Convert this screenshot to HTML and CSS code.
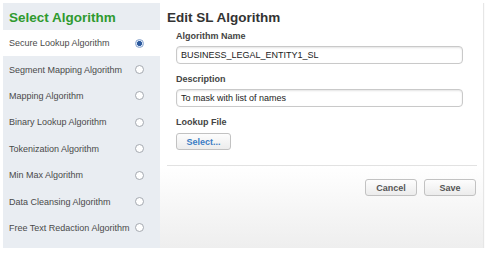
FILE: index.html
```html
<!DOCTYPE html>
<html lang="en">
<head>
    <meta charset="UTF-8">
    <title>Edit SL Algorithm</title>
    <link rel="stylesheet" href="styles.css">
</head>
<body>
    <div class="dialog">
        <div class="sidebar">
            <h1 class="sidebar-title">Select Algorithm</h1>
            <ul class="algo-list">
                <li class="algo-item selected"><span>Secure Lookup Algorithm</span><span class="radio"></span></li>
                <li class="algo-item"><span>Segment Mapping Algorithm</span><span class="radio"></span></li>
                <li class="algo-item"><span>Mapping Algorithm</span><span class="radio"></span></li>
                <li class="algo-item"><span>Binary Lookup Algorithm</span><span class="radio"></span></li>
                <li class="algo-item"><span>Tokenization Algorithm</span><span class="radio"></span></li>
                <li class="algo-item"><span>Min Max Algorithm</span><span class="radio"></span></li>
                <li class="algo-item"><span>Data Cleansing Algorithm</span><span class="radio"></span></li>
                <li class="algo-item"><span>Free Text Redaction Algorithm</span><span class="radio"></span></li>
            </ul>
        </div>

        <div class="editor">
            <h2 class="editor-title">Edit SL Algorithm</h2>
            <div class="form">
                <div class="field">
                    <label class="field-label">Algorithm Name</label>
                    <div class="text-input">BUSINESS_LEGAL_ENTITY1_SL</div>
                </div>
                <div class="field">
                    <label class="field-label">Description</label>
                    <div class="text-input">To mask with list of names</div>
                </div>
                <div class="field">
                    <label class="field-label">Lookup File</label>
                    <button class="btn btn-select">Select...</button>
                </div>
            </div>
            <div class="divider"></div>
            <div class="footer">
                <button class="btn btn-action">Cancel</button>
                <button class="btn btn-action">Save</button>
            </div>
        </div>
    </div>
</body>
</html>
```

FILE: styles.css
```css
body {
    margin: 3px;
    background-color: #fff;
    font-family: "Liberation Sans", Arial, sans-serif;
}

.dialog {
    display: flex;
    width: 480px;
    height: 245px;
}

/* left column */
.sidebar {
    width: 157px;
    background-color: #e9edf2;
}

.sidebar-title {
    margin: 0;
    height: 27px;
    padding-left: 6px;
    line-height: 29px;
    font-size: 13.5px;
    font-weight: bold;
    color: #2f9a2f;
}

.algo-list {
    list-style: none;
    margin: 0;
    padding: 0;
}

.algo-item {
    display: flex;
    align-items: center;
    justify-content: space-between;
    height: 26.4px;
    padding: 0 16px 0 6px;
    font-size: 9px;
    color: #4a4a4a;
}

.algo-item.selected {
    background-color: #fff;
}

.radio {
    width: 7px;
    height: 7px;
    border: 1px solid #a4a9b0;
    border-radius: 50%;
    background-color: #fff;
}

.selected .radio {
    border-color: #8aa6cf;
    background: radial-gradient(circle, #2c5a9e 0 2.2px, #dbe6f5 2.8px);
}

/* right column */
.editor {
    flex: 1;
    display: flex;
    flex-direction: column;
    background-color: #fff;
    box-shadow: 1px 0 1px #e6e6e6;
}

.editor-title {
    margin: 0;
    padding: 6px 7px 0;
    line-height: 18px;
    font-size: 13.5px;
    font-weight: bold;
    color: #333;
}

.form {
    display: flex;
    flex-direction: column;
    gap: 9px;
    padding: 3px 0 0 16px;
}

.field {
    display: flex;
    flex-direction: column;
    align-items: flex-start;
}

.field-label {
    line-height: 12px;
    margin-bottom: 4px;
    font-size: 9px;
    font-weight: bold;
    color: #444;
}

.text-input {
    box-sizing: border-box;
    width: 287px;
    height: 18px;
    padding: 0 4px;
    line-height: 16px;
    border: 1px solid #c9c9c9;
    border-radius: 4px;
    box-shadow: inset 0 1px 2px #e4e4e4;
    font-size: 9px;
    color: #222;
}

.btn {
    box-sizing: border-box;
    padding: 0;
    border: 1px solid #c2c2c2;
    border-radius: 3px;
    background: linear-gradient(#fdfdfd, #ececec);
    font-family: "Liberation Sans", Arial, sans-serif;
    font-size: 9px;
    font-weight: bold;
}

.btn-select {
    width: 55px;
    height: 17px;
    margin-top: 1px;
    color: #3b7cc4;
}

.divider {
    height: 1px;
    margin: 15px 6px 0 7px;
    background-color: #e2e2e2;
}

.footer {
    flex: 1;
    display: flex;
    justify-content: flex-end;
    align-items: flex-start;
    gap: 7px;
    padding: 13px 7px 0 0;
    background: linear-gradient(#fff, #eeeeee);
}

.btn-action {
    width: 52px;
    height: 17px;
    color: #555;
}
```
